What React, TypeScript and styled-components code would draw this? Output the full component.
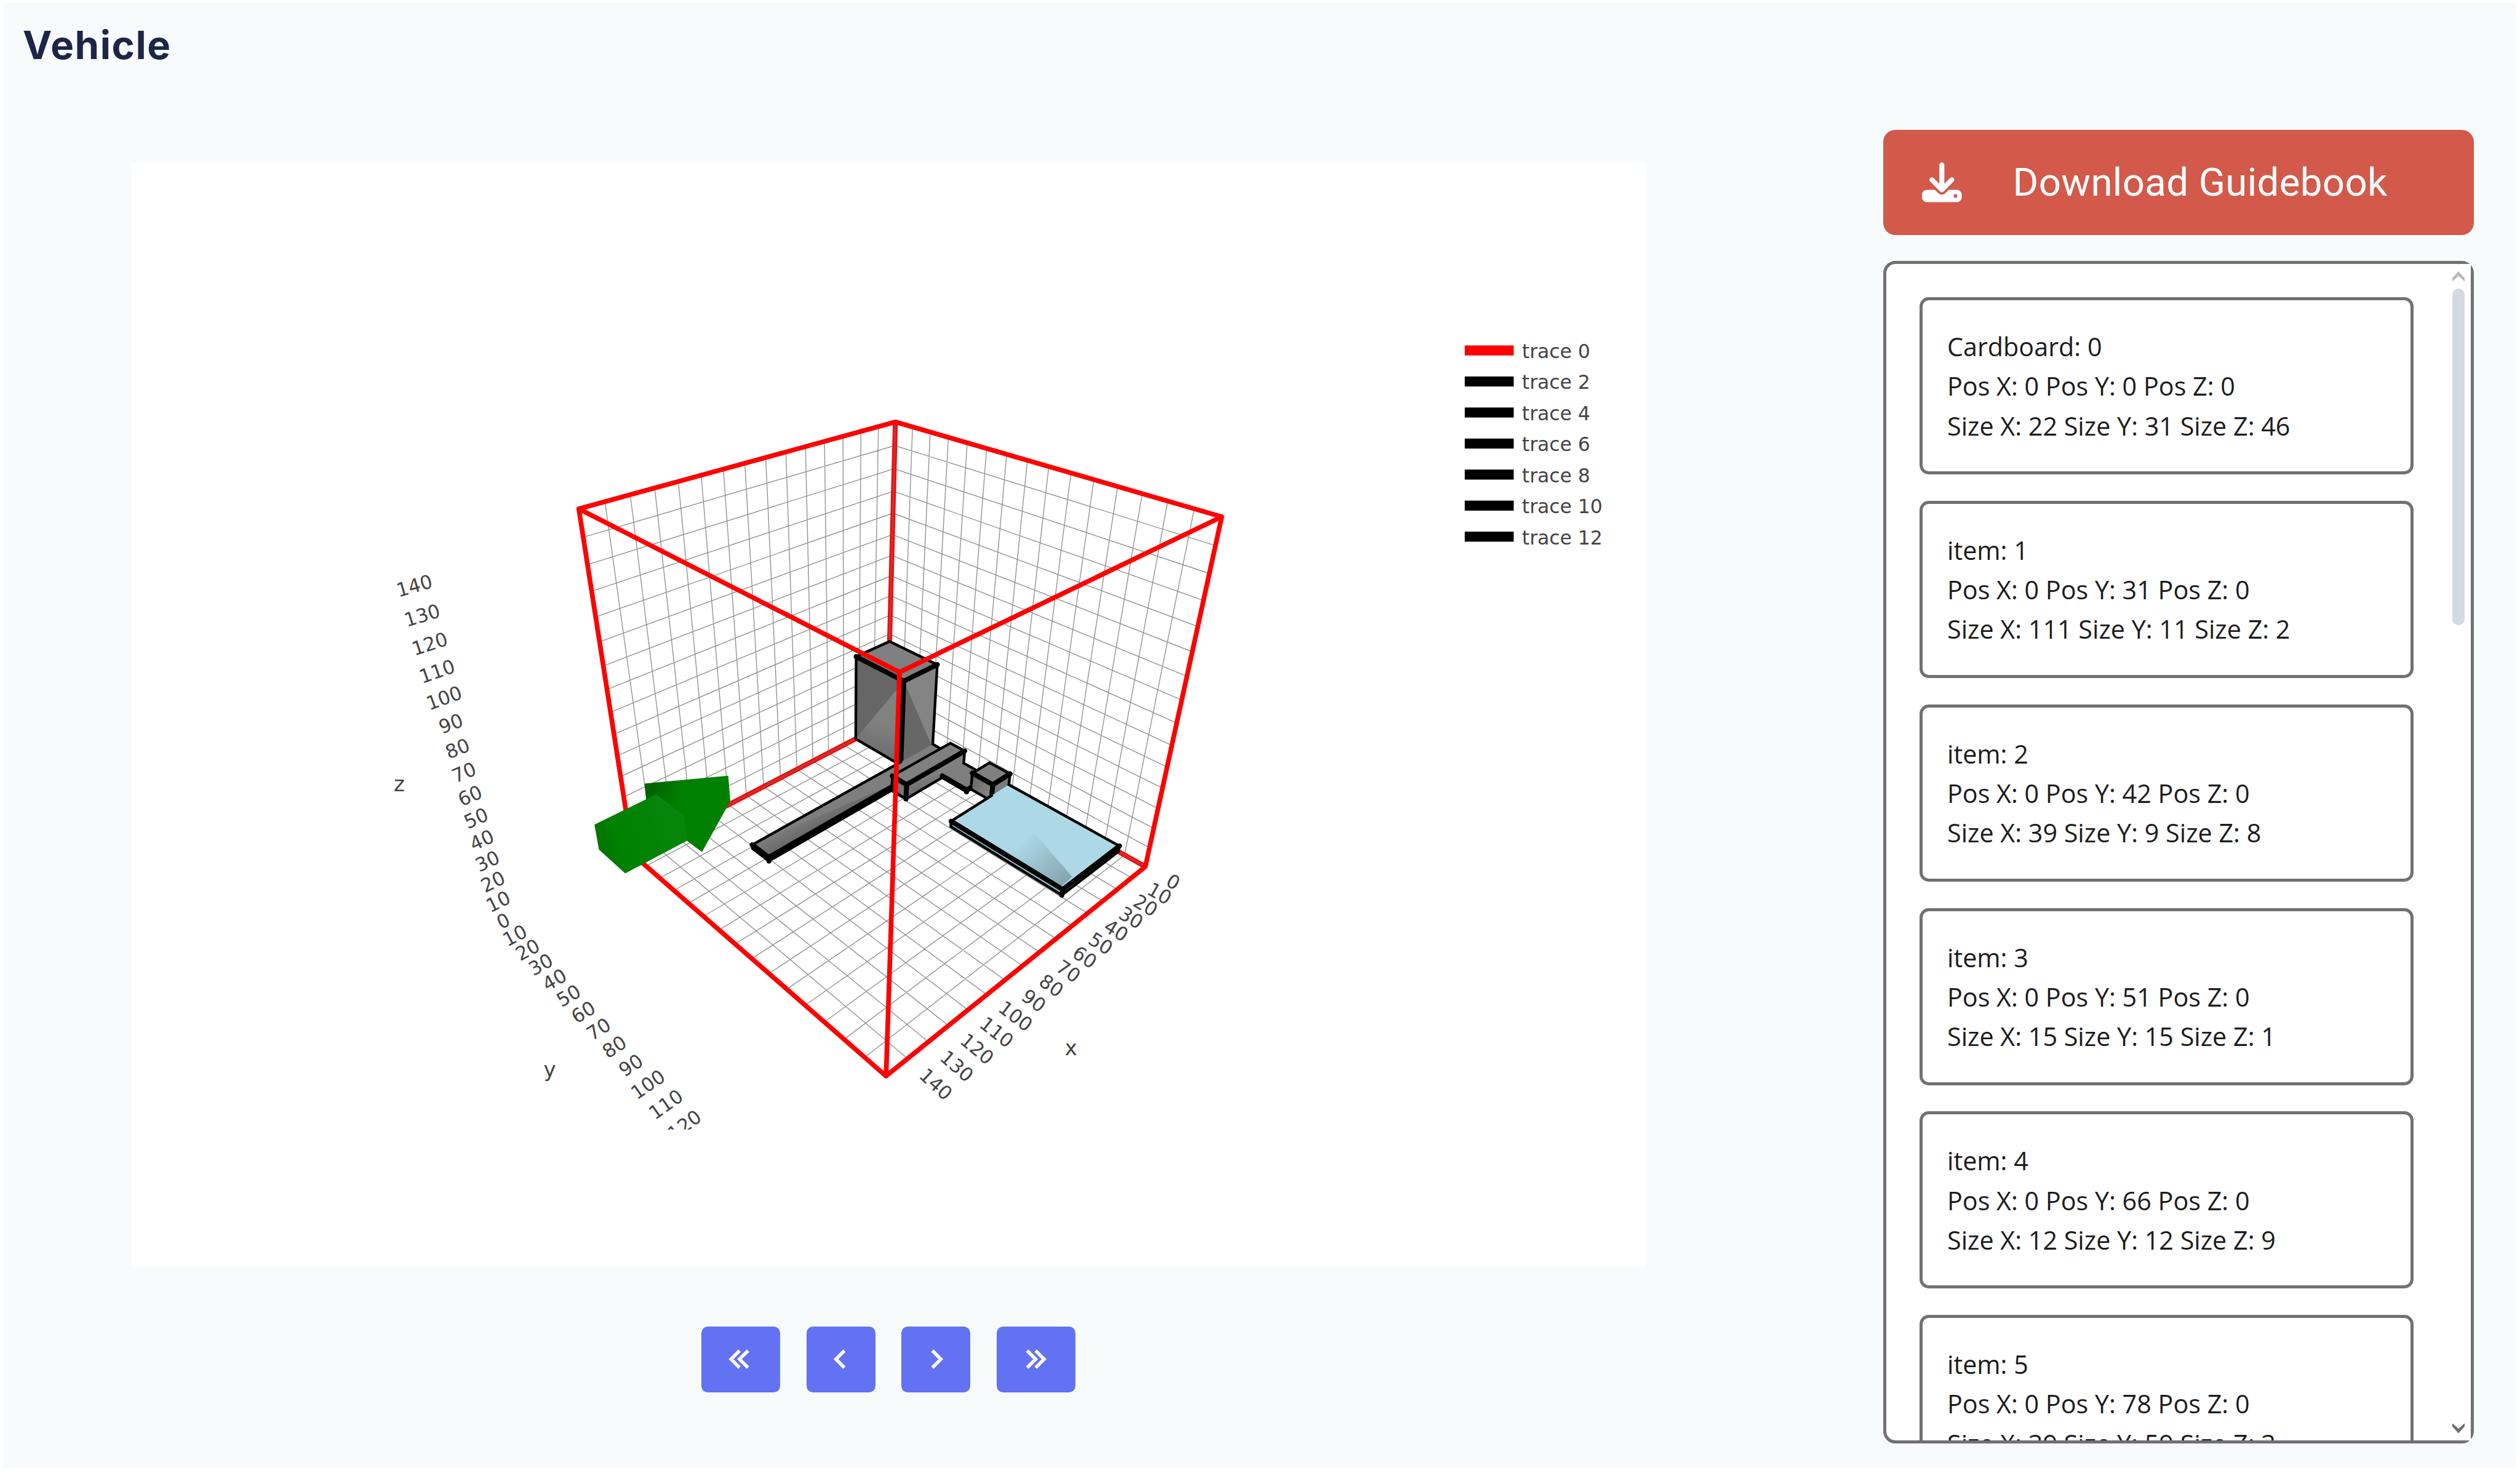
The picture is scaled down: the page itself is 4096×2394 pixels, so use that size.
import React from "react";
import styled, { createGlobalStyle } from "styled-components";
import { BiChevronLeft, BiChevronRight, BiChevronsLeft, BiChevronsRight } from "react-icons/bi";
import { FaDownload } from "react-icons/fa6";

const GlobalStyle = createGlobalStyle`
  *, *::before, *::after { box-sizing: border-box; }
  body { margin: 0; background: #ffffff; }
`;

const Page = styled.div`
  width: 4096px;
  height: 2394px;
  padding: 5px 6px 8px 5px;
  overflow: hidden;
  background: #ffffff;
`;

const Shell = styled.main`
  display: flex;
  flex-direction: column;
  width: 100%;
  height: 100%;
  background: #f7fbfc;
`;

const Header = styled.header`
  flex: none;
  height: 206px;
  padding: 23px 0 0 32px;
`;

const Title = styled.h1`
  margin: 0;
  font-family: Inter, "Open Sans", sans-serif;
  font-size: 63.5px;
  font-weight: 650;
  line-height: 90px;
  letter-spacing: 1.6px;
  color: #1e2549;
`;

const Body = styled.div`
  display: flex;
  gap: 386.5px;
  padding-left: 208.5px;
`;

const Viewer = styled.section`
  display: flex;
  flex-direction: column;
  align-items: center;
  width: 2461px;
  padding-top: 53px;
`;

const ChartCard = styled.div`
  width: 2461px;
  height: 1794.7px;
  background: #ffffff;
`;

const ChartSvg = styled.svg`
  display: block;
  width: 100%;
  height: 100%;
`;

const ChartText = styled.text<{ $size: number }>`
  font-family: "DejaVu Sans", Verdana, sans-serif;
  font-size: ${(p) => p.$size}px;
  fill: #444444;
`;

const StepNav = styled.nav`
  display: flex;
  gap: 42.5px;
  margin-top: 97px;
`;

const StepButton = styled.button<{ $wide?: boolean; $nudge?: number }>`
  display: flex;
  align-items: center;
  justify-content: center;
  width: ${(p) => (p.$wide ? 128 : 112)}px;
  height: 107px;
  padding: 0;
  border: 0;
  border-radius: 10.5px;
  background: #6371f3;
  color: #ffffff;
  font-size: 66px;

  svg {
    margin-left: ${(p) => p.$nudge ?? 0}px;
  }
`;

const Side = styled.aside`
  display: flex;
  flex-direction: column;
  gap: 42.7px;
  width: 960px;
`;

const DownloadButton = styled.button`
  display: flex;
  align-items: center;
  height: 170.8px;
  padding: 0 0 0 63px;
  gap: 83px;
  border: 0;
  border-radius: 20px;
  background: #d3594a;
  color: #ffffff;
  font-family: Roboto, sans-serif;
  font-size: 63.5px;
  letter-spacing: 0.4px;
  white-space: nowrap;

  svg {
    width: 64.6px;
    height: 64.6px;
  }
`;

const ListPanel = styled.div`
  display: flex;
  height: 1921.2px;
  border: 5px solid #717171;
  border-radius: 20px;
  background: #ffffff;
`;

const ItemList = styled.ul`
  display: flex;
  flex: 1;
  flex-direction: column;
  gap: 42.8px;
  margin: 0;
  padding: 53.8px 53.5px 0;
  overflow: hidden;
  list-style: none;
`;

const ItemCard = styled.li`
  flex: none;
  height: 288px;
  padding: 43px 38px 0 40.5px;
  border: 5px solid #717171;
  border-radius: 15px;
  font-family: "Open Sans", "Noto Sans", sans-serif;
  font-size: 41.3px;
  line-height: 64.2px;
  color: #1c1c1c;
  white-space: nowrap;
`;

const ScrollTrack = styled.div`
  display: flex;
  flex: none;
  flex-direction: column;
  align-items: center;
  width: 40px;
  padding: 11.4px 0 11.7px;
  background: #ffffff;
`;

const ScrollThumb = styled.div`
  width: 20px;
  height: 547px;
  margin: 12px 0 auto;
  border-radius: 10px;
  background: #d3dae2;
`;

const ScrollArrow = styled.svg<{ $down?: boolean }>`
  width: 20px;
  height: 16.4px;
  fill: ${(p) => (p.$down ? "#707070" : "#b8b8b8")};
  transform: ${(p) => (p.$down ? "scaleY(-1)" : "none")};
`;

type Vec2 = [number, number];
type Vec3 = [number, number, number];

const SIDE = 150;

// Perspective camera: rows give screen x, screen y and depth for a point in the unit cube.
const CAMERA = {
  u: [-0.8869, 0.1079, -0.3433, 2.1639],
  v: [-0.0375, -0.0421, -0.9026, 1.76],
  w: [-0.1726, -0.1864, -0.1661, 1],
};

function project(X: number, Y: number, Z: number): Vec2 {
  const dot = (r: number[]) => (r[0] * X + r[1] * Y + r[2] * Z) / SIDE + r[3];
  const depth = dot(CAMERA.w);
  return [(1000 * dot(CAMERA.u)) / depth, (1000 * dot(CAMERA.v)) / depth];
}

const path = (pts: Vec3[]) =>
  pts
    .map(
      ([x, y, z], i) =>
        `${i ? "L" : "M"}${project(x, y, z)
          .map((n) => n.toFixed(1))
          .join(" ")}`
    )
    .join("");

const ticks = Array.from({ length: 14 }, (_, i) => (i + 1) * 10);

const gridPath = ticks
  .map((t) =>
    [
      path([[t, 0, 0], [t, 0, SIDE]]),
      path([[0, t, 0], [0, t, SIDE]]),
      path([[0, 0, t], [SIDE, 0, t]]),
      path([[0, 0, t], [0, SIDE, t]]),
      path([[t, 0, 0], [t, SIDE, 0]]),
      path([[0, t, 0], [SIDE, t, 0]]),
    ].join("")
  )
  .join("");

const backEdges = path([[0, 0, SIDE], [0, 0, 0]]) + path([[SIDE, 0, 0], [0, 0, 0], [0, SIDE, 0]]);
const frontEdges =
  path([[SIDE, 0, 0], [SIDE, 0, SIDE], [0, 0, SIDE], [0, SIDE, SIDE], [0, SIDE, 0], [SIDE, SIDE, 0], [SIDE, 0, 0]]) +
  path([[SIDE, 0, SIDE], [SIDE, SIDE, SIDE], [0, SIDE, SIDE]]) +
  path([[SIDE, SIDE, SIDE], [SIDE, SIDE, 0]]);

interface Item {
  name: string;
  pos: Vec3;
  size: Vec3;
}

const items: Item[] = [
  { name: "Cardboard: 0", pos: [0, 0, 0], size: [22, 31, 46] },
  { name: "item: 1", pos: [0, 31, 0], size: [111, 11, 2] },
  { name: "item: 2", pos: [0, 42, 0], size: [39, 9, 8] },
  { name: "item: 3", pos: [0, 51, 0], size: [15, 15, 1] },
  { name: "item: 4", pos: [0, 66, 0], size: [12, 12, 9] },
  { name: "item: 5", pos: [0, 78, 0], size: [39, 59, 3] },
];

const faceFills: { top: string; left: string; right: string }[] = [
  { top: "#808080", left: "url(#tallLeft)", right: "#848484" },
  { top: "#7e7e7e", left: "#777777", right: "#6b6b6b" },
  { top: "#808080", left: "#757575", right: "url(#beamRight)" },
  { top: "#7e7e7e", left: "#777777", right: "#6b6b6b" },
  { top: "#808080", left: "url(#cubeSide)", right: "#7a7a7a" },
  { top: "#add8e6", left: "#8fb4c0", right: "#8fb4c0" },
];

function BoxShape({ item, index }: { item: Item; index: number }) {
  const [x0, y0, z0] = item.pos;
  const x1 = x0 + item.size[0];
  const y1 = y0 + item.size[1];
  const z1 = z0 + item.size[2];
  const fill = faceFills[index];
  const hidden = index < 5 ? items[index + 1].size[0] : 0;
  const backStart = index > 0 ? Math.min(items[index - 1].size[0], x1) : 0;
  const outline =
    path([[x1, y1, z0], [x1, y0, z0], [x1, y0, z1], [backStart, y0, z1]]) +
    path([[0, y0, z1], [0, y1, z1], [0, y1, z0]]) +
    (hidden < x1 ? path([[x1, y1, z0], [hidden, y1, z0]]) : "") +
    (index > 0 && item.size[2] > items[index - 1].size[2] ? path([[x1, y0, z1], [0, y0, z1]]) : "");
  return (
    <g strokeLinejoin="round" strokeLinecap="round">
      <path d={path([[x0, y0, z1], [x1, y0, z1], [x1, y1, z1], [x0, y1, z1]]) + "Z"} fill={fill.top} />
      <path d={path([[x1, y0, z0], [x1, y1, z0], [x1, y1, z1], [x1, y0, z1]]) + "Z"} fill={fill.left} />
      <path d={path([[x0, y1, z0], [x1, y1, z0], [x1, y1, z1], [x0, y1, z1]]) + "Z"} fill={fill.right} />
      {index === 0 && (
        <>
          <path d={path([[x1, y0, z0], [x1, y0, z1], [x1, y1, z1]]) + "Z"} fill="#666666" />
          <path d={path([[x1, y1, z0], [x0, y1, z0], [x1, y1, z1]]) + "Z"} fill="#676767" />
        </>
      )}
      {index === 1 && <path d={path([[x1, y1, z1], [x1, y0, z1], [30, y1, z1]]) + "Z"} fill="url(#plankShade)" />}
      {index === 5 && <path d="M2517 2024L2614 2136L2585 2162L2400 2040Z" fill="url(#slabShade)" />}
      <path d={outline} fill="none" stroke="#000" strokeWidth={6.5} />
      <path
        d={path([[x1, y0, z1], [x1, y1, z1], [x0, y1, z1]]) + path([[x1, y1, z1], [x1, y1, z0]])}
        fill="none"
        stroke="#000"
        strokeWidth={12}
      />
    </g>
  );
}

// Places a tick between two end positions, foreshortened by the depth weight.
function along(a: Vec2, b: Vec2, weight: number, t: number): Vec2 {
  const s = 1 - t + t * weight;
  return [((1 - t) * a[0] + t * weight * b[0]) / s, ((1 - t) * a[1] + t * weight * b[1]) / s];
}

interface AxisTick {
  key: string;
  value: number;
  at: Vec2;
  edge: Vec2;
}

const axisTicks: AxisTick[] = [
  ...[0, ...ticks].map((v) => ({
    key: `z${v}`,
    value: v,
    at: along([1227.2, 2244], [1010.2, 1427.7], 0.795, v / 140),
    edge: project(SIDE, 0, v),
  })),
  ...ticks.map((v) => ({
    key: `y${v}`,
    value: v,
    at: along([1255.3, 2279.4], [1623.2, 2690.9], 0.83, (v - 10) / 100),
    edge: project(SIDE, v, 0),
  })),
  ...[0, ...ticks].map((v) => ({
    key: `x${v}`,
    value: v,
    at: along([2858.9, 2149.1], [2280.5, 2641.5], 0.79, v / 140),
    edge: project(v, SIDE, 0),
  })),
];

const slope = ({ at, edge }: AxisTick) => (Math.atan((edge[1] - at[1]) / (edge[0] - at[0])) * 180) / Math.PI;

const legend = [0, 2, 4, 6, 8, 10, 12];

function Scene() {
  return (
    <ChartSvg viewBox="320 396 3689 2690" preserveAspectRatio="none">
      <defs>
        <clipPath id="plotArea">
          <rect x="320" y="396" width="3689" height="2356" />
        </clipPath>
        <linearGradient id="tallLeft" gradientUnits="userSpaceOnUse" x1="2150" y1="1760" x2="2130" y2="1850">
          <stop offset="0" stopColor="#818181" />
          <stop offset="1" stopColor="#6a6a6a" />
        </linearGradient>
        <linearGradient id="beamRight" gradientUnits="userSpaceOnUse" x1="2290" y1="1880" x2="2302" y2="1925">
          <stop offset="0" stopColor="#808080" />
          <stop offset="1" stopColor="#666666" />
        </linearGradient>
        <linearGradient id="cubeSide" gradientUnits="userSpaceOnUse" x1="2370" y1="1900" x2="2412" y2="1925">
          <stop offset="0" stopColor="#696969" />
          <stop offset="1" stopColor="#828282" />
        </linearGradient>
        <linearGradient id="plankShade" gradientUnits="userSpaceOnUse" x1="1900" y1="2020" x2="1925" y2="2065">
          <stop offset="0" stopColor="#666" stopOpacity="0" />
          <stop offset="1" stopColor="#606060" stopOpacity="0.9" />
        </linearGradient>
        <linearGradient id="slabShade" gradientUnits="userSpaceOnUse" x1="2490" y1="2052" x2="2580" y2="2155">
          <stop offset="0" stopColor="#88a9b4" stopOpacity="0" />
          <stop offset="1" stopColor="#86a8b3" />
        </linearGradient>
        <linearGradient id="arrowHead" gradientUnits="userSpaceOnUse" x1="1588" y1="1925" x2="1662" y2="1938">
          <stop offset="0" stopColor="#006400" />
          <stop offset="1" stopColor="#008000" />
        </linearGradient>
        <linearGradient id="arrowBody" gradientUnits="userSpaceOnUse" x1="1462" y1="2045" x2="1660" y2="1980">
          <stop offset="0" stopColor="#007600" />
          <stop offset="0.2" stopColor="#008100" />
          <stop offset="1" stopColor="#07860d" />
        </linearGradient>
      </defs>

      <g transform="translate(-2.5 0)">
        <path d={gridPath} fill="none" stroke="#808080" strokeOpacity={0.85} strokeWidth={2.1} />
        <path d={backEdges} fill="none" stroke="#ff0000" strokeWidth={12} />
        <path d={backEdges} fill="none" stroke="#b04848" strokeWidth={5} strokeOpacity={0.75} />

        {items.map((item, i) => (
          <BoxShape key={item.name} item={item} index={i} />
        ))}

        <path
          d={frontEdges}
          fill="none"
          stroke="#ff0000"
          strokeWidth={11.5}
          strokeLinejoin="round"
          strokeLinecap="round"
        />

        <path d="M1572 1909L1776 1890L1781 1952L1712 2076L1675 2048L1576 1947Z" fill="url(#arrowHead)" />
        <path d="M1601 1935L1450 2009L1461 2070L1525 2128L1676 2048L1668 1987Z" fill="url(#arrowBody)" />
      </g>

      <g clipPath="url(#plotArea)">
        {axisTicks.map((tick) => (
          <ChartText
            key={tick.key}
            $size={46.5}
            textAnchor="middle"
            transform={`translate(${tick.at[0] - 1.5} ${tick.at[1]}) rotate(${slope(tick)})`}
            y={16}
          >
            {tick.value}
          </ChartText>
        ))}
        <ChartText $size={51} textAnchor="middle" x={972} y={1928}>
          z
        </ChartText>
        <ChartText $size={51} textAnchor="middle" x={1338.5} y={2624}>
          y
        </ChartText>
        <ChartText $size={51} textAnchor="middle" x={2608.5} y={2571}>
          x
        </ChartText>
      </g>

      {legend.map((n, i) => (
        <g key={n} transform={`translate(0 ${854 + i * 75.6})`}>
          <rect x={3568} y={-12.2} width={119.3} height={24.4} fill={i === 0 ? "#ff0000" : "#000000"} />
          <ChartText $size={47} x={3707.5} y={18.5}>
            trace {n}
          </ChartText>
        </g>
      ))}
    </ChartSvg>
  );
}

const axisSummary = (label: string, [x, y, z]: Vec3) => `${label} X: ${x} ${label} Y: ${y} ${label} Z: ${z}`;

export default function App() {
  return (
    <Page>
      <GlobalStyle />
      <Shell>
        <Header>
          <Title>Vehicle</Title>
        </Header>
        <Body>
          <Viewer>
            <ChartCard>
              <Scene />
            </ChartCard>
            <StepNav>
              <StepButton $wide $nudge={-5} aria-label="First">
                <BiChevronsLeft />
              </StepButton>
              <StepButton aria-label="Previous">
                <BiChevronLeft />
              </StepButton>
              <StepButton aria-label="Next">
                <BiChevronRight />
              </StepButton>
              <StepButton $wide $nudge={5} aria-label="Last">
                <BiChevronsRight />
              </StepButton>
            </StepNav>
          </Viewer>
          <Side>
            <DownloadButton>
              <FaDownload />
              Download Guidebook
            </DownloadButton>
            <ListPanel>
              <ItemList>
                {items.map((item) => (
                  <ItemCard key={item.name}>
                    <div>{item.name}</div>
                    <div>{axisSummary("Pos", item.pos)}</div>
                    <div>{axisSummary("Size", item.size)}</div>
                  </ItemCard>
                ))}
              </ItemList>
              <ScrollTrack>
                <ScrollArrow viewBox="0 0 30 24" preserveAspectRatio="none">
                  <path d="M15 0L30 16V24L15 11L0 24V16Z" />
                </ScrollArrow>
                <ScrollThumb />
                <ScrollArrow $down viewBox="0 0 30 24" preserveAspectRatio="none">
                  <path d="M15 0L30 16V24L15 11L0 24V16Z" />
                </ScrollArrow>
              </ScrollTrack>
            </ListPanel>
          </Side>
        </Body>
      </Shell>
    </Page>
  );
}
